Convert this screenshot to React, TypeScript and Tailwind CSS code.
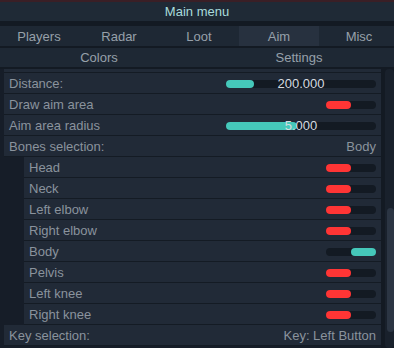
const tabs = ['Players', 'Radar', 'Loot', 'Aim', 'Misc']

type Row =
  | { kind: 'slider'; label: string; fill: number; value: string }
  | { kind: 'toggle'; label: string; on: boolean; sub?: boolean }
  | { kind: 'text'; label: string; value: string }

const rows: Row[] = [
  { kind: 'slider', label: 'Distance:', fill: 28, value: '200.000' },
  { kind: 'toggle', label: 'Draw aim area', on: false },
  { kind: 'slider', label: 'Aim area radius', fill: 71, value: '5.000' },
  { kind: 'text', label: 'Bones selection:', value: 'Body' },
  { kind: 'toggle', label: 'Head', on: false, sub: true },
  { kind: 'toggle', label: 'Neck', on: false, sub: true },
  { kind: 'toggle', label: 'Left elbow', on: false, sub: true },
  { kind: 'toggle', label: 'Right elbow', on: false, sub: true },
  { kind: 'toggle', label: 'Body', on: true, sub: true },
  { kind: 'toggle', label: 'Pelvis', on: false, sub: true },
  { kind: 'toggle', label: 'Left knee', on: false, sub: true },
  { kind: 'toggle', label: 'Right knee', on: false, sub: true },
  { kind: 'text', label: 'Key selection:', value: 'Key: Left Button' },
]

function Toggle({ on }: { on: boolean }) {
  return (
    <div className="flex h-[8px] w-[50px] rounded-full bg-[#131a23]">
      {on ? (
        <div className="ml-auto h-full w-[25px] rounded-full bg-[#45c8ba]" />
      ) : (
        <div className="h-full w-[25px] rounded-full bg-[#ff3535]" />
      )}
    </div>
  )
}

function Slider({ fill, value }: { fill: number; value: string }) {
  return (
    <div className="relative h-[8px] w-[150px] rounded-full bg-[#131a23]">
      <div className="h-full rounded-full bg-[#45c8ba]" style={{ width: fill }} />
      <span className="absolute inset-0 flex items-center justify-center text-[13px] leading-none text-[#d6dbe0]">
        {value}
      </span>
    </div>
  )
}

export default function App() {
  return (
    <div
      className="flex h-[348px] w-[394px] flex-col overflow-hidden border-t-2 border-[#3a1f26] bg-[#131a23] text-[13px]"
      style={{ fontFamily: '"Liberation Sans", Arial, sans-serif' }}
    >
      <div className="flex h-[19px] shrink-0 items-center justify-center bg-[#1f2a36] pt-px text-[#a9dcdc]">
        Main menu
      </div>
      <div className="h-[5px] shrink-0" />
      <div className="-ml-px flex h-[20px] shrink-0">
        {tabs.map(t => (
          <div
            key={t}
            className={`flex w-[80px] shrink-0 items-center justify-center pt-px text-[#97a0aa] ${t === 'Aim' ? 'bg-[#27313f]' : 'bg-[#1e2834]'}`}
          >
            {t}
          </div>
        ))}
      </div>
      <div className="h-[2px] shrink-0" />
      <div className="-ml-px flex h-[19px] shrink-0">
        {['Colors', 'Settings'].map(t => (
          <div key={t} className="flex w-[200px] shrink-0 items-center justify-center bg-[#1e2834] pt-px text-[#97a0aa]">
            {t}
          </div>
        ))}
      </div>
      <div className="flex min-h-0 flex-1 pt-[2px]">
        <div className="flex min-w-0 flex-1 flex-col bg-[#161d28] pl-[4px]">
          <div className="h-[4px] shrink-0 border-b border-[#141b24] bg-[#212a37]" />
          {rows.map(r => (
            <div
              key={r.label}
              className={`flex h-[21px] shrink-0 items-center border-b border-[#141b24] bg-[#212a37] pr-[5px] pt-px text-[#8a939d] ${r.kind === 'toggle' && r.sub ? 'ml-[20px] pl-[5px]' : 'pl-[5px]'}`}
            >
              <span className="flex-1">{r.label}</span>
              {r.kind === 'toggle' && <Toggle on={r.on} />}
              {r.kind === 'slider' && <Slider fill={r.fill} value={r.value} />}
              {r.kind === 'text' && <span>{r.value}</span>}
            </div>
          ))}
        </div>
        <div className="flex w-[13px] shrink-0 pl-[4px]">
          <div className="flex flex-1 flex-col rounded-sm bg-[#19212c] pb-[16px] pl-[2px] pt-[139px]">
            <div className="flex-1 rounded-sm bg-[#2b3543]" />
          </div>
        </div>
      </div>
    </div>
  )
}
